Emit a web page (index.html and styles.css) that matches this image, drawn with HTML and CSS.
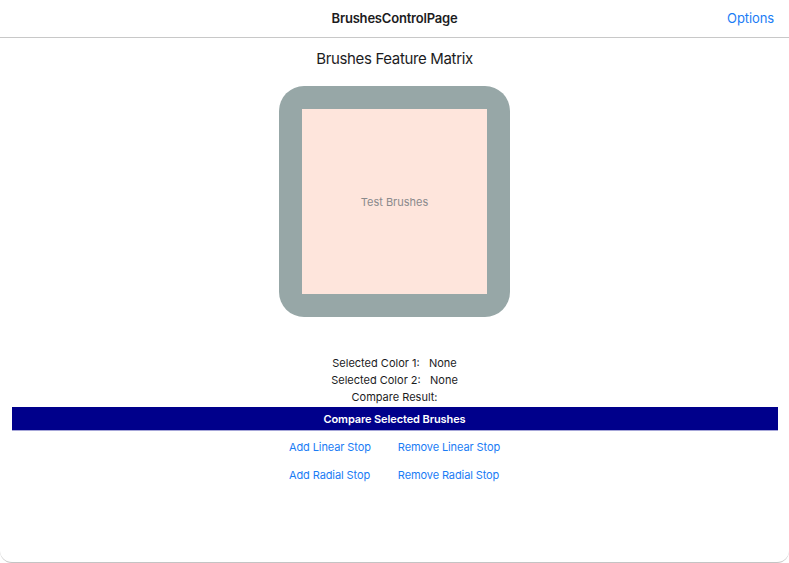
FILE: index.html
```html
<!DOCTYPE html>
<html>
<head>
<meta charset="utf-8">
<link rel="stylesheet" href="styles.css">
</head>
<body>
<div class="window">
  <header class="nav">
    <div class="nav-title">BrushesControlPage</div>
    <div class="nav-action">Options</div>
  </header>
  <main class="content">
    <h1 class="page-title">Brushes Feature Matrix</h1>
    <div class="brush-frame">
      <div class="brush-fill">Test Brushes</div>
    </div>
    <div class="info">
      <div class="info-row">Selected Color 1:&nbsp;&nbsp; None</div>
      <div class="info-row">Selected Color 2:&nbsp;&nbsp; None</div>
      <div class="info-row">Compare Result:</div>
    </div>
    <div class="compare-btn">Compare Selected Brushes</div>
    <div class="links">
      <span class="link">Add Linear Stop</span><span class="link">Remove Linear Stop</span>
      <span class="link">Add Radial Stop</span><span class="link">Remove Radial Stop</span>
    </div>
  </main>
</div>
</body>
</html>
```
FILE: styles.css
```css
* { box-sizing: border-box; }
html, body { margin: 0; padding: 0; background: #fff; }
body { font-family: Inter, "Noto Sans", sans-serif; color: #1c1c1e; }
.window {
  width: 789px;
  height: 563px;
  border-bottom: 1px solid #c4c4c4;
  border-radius: 0 0 12px 12px;
  overflow: hidden;
}
.nav {
  position: relative;
  height: 38px;
  border-bottom: 1px solid #c8c8c8;
  display: flex;
  align-items: center;
  justify-content: center;
}
.nav-title { font-size: 13px; font-weight: 600; letter-spacing: -0.2px; padding-bottom: 2px; }
.nav-action {
  position: absolute;
  right: 15px;
  top: 10px;
  font-size: 13px;
  letter-spacing: -0.1px;
  color: #1a7cf5;
}
.content { display: flex; flex-direction: column; align-items: center; }
.page-title { margin: 11px 0 0; font-size: 15px; font-weight: 400; line-height: 20px; letter-spacing: -0.35px; }
.brush-frame {
  margin-top: 17px;
  width: 231px;
  height: 231px;
  background: #97a7a7;
  border-radius: 25px;
  padding: 23px;
}
.brush-fill {
  width: 185px;
  height: 185px;
  background: #fee5dc;
  display: flex;
  align-items: center;
  justify-content: center;
  font-size: 11px;
  color: #8a8a8c;
}
.info { margin-top: 38px; display: flex; flex-direction: column; align-items: center; font-size: 11px; line-height: 17px; }
.compare-btn {
  margin-top: 1px;
  width: 766px;
  height: 24px;
  background: #00008b;
  border-bottom: 1px solid #a6a6d8;
  color: #fff;
  font-size: 11px;
  font-weight: 600;
  letter-spacing: -0.1px;
  display: flex;
  align-items: center;
  justify-content: center;
}
.links {
  margin-top: 8px;
  display: grid;
  grid-template-columns: auto auto;
  column-gap: 27px;
  row-gap: 11px;
  font-size: 11px;
  line-height: 17px;
  white-space: nowrap;
}
.link { color: #1a7cf5; letter-spacing: -0.1px; }
```
